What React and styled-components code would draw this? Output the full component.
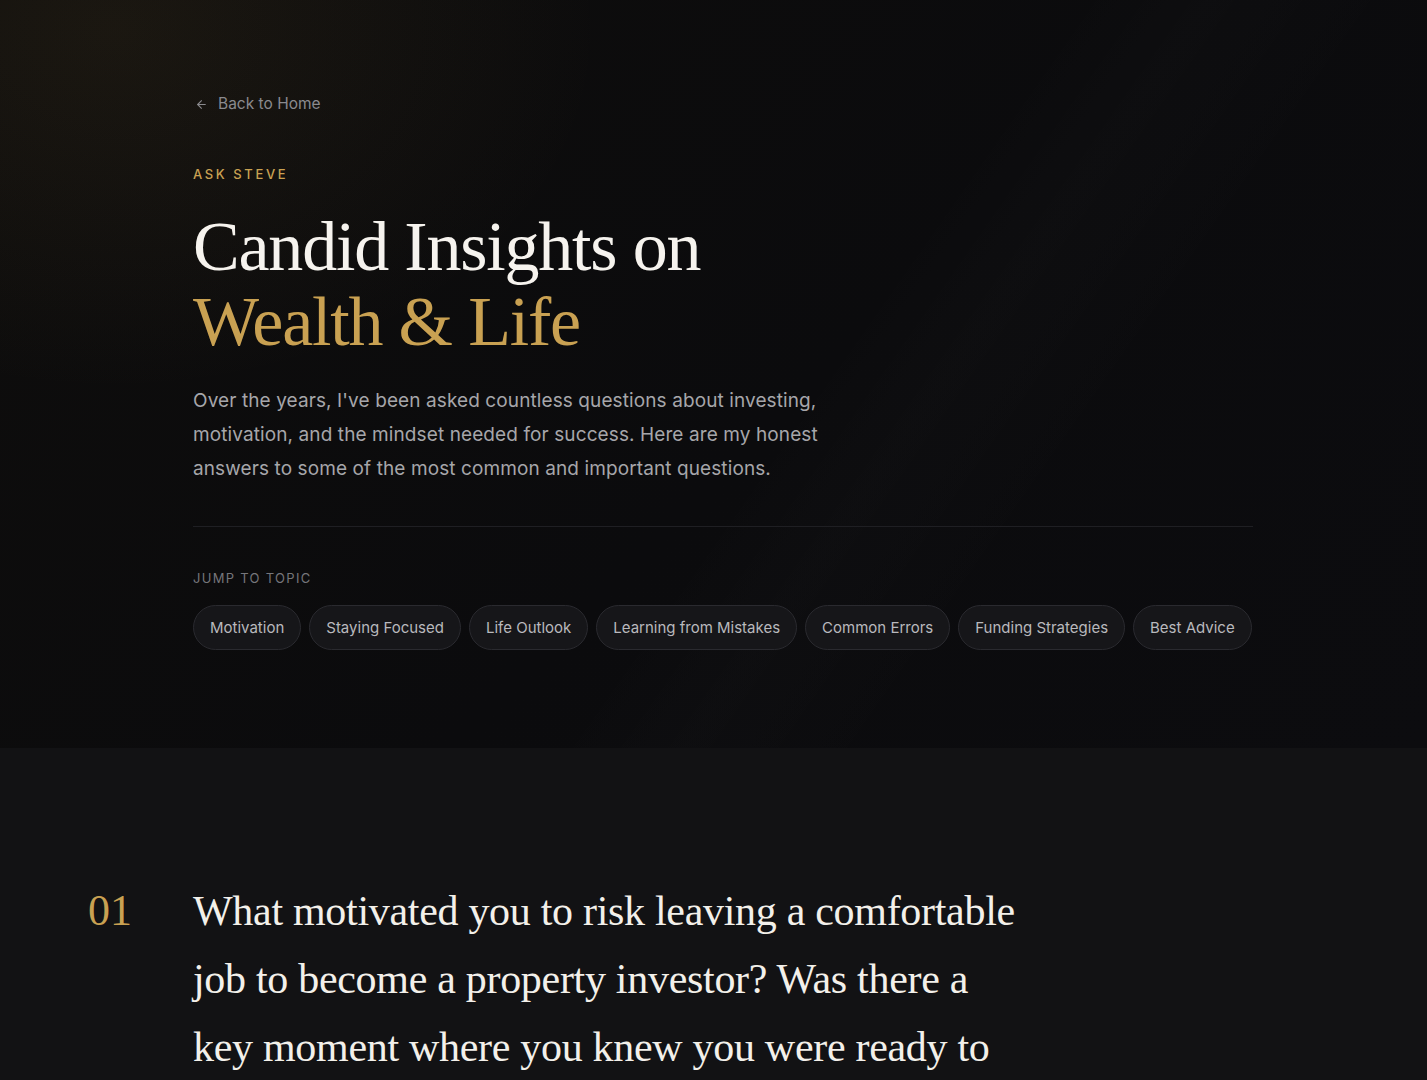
import React from 'react';
import styled, { createGlobalStyle } from 'styled-components';
import { ArrowLeft } from 'lucide-react';

const GlobalStyle = createGlobalStyle`
  html, body {
    margin: 0;
    padding: 0;
    background: #121214;
  }
  * {
    box-sizing: border-box;
  }
`;

const serif = `"Liberation Serif", "Times New Roman", serif`;
const sans = `Inter, "Noto Sans", "Liberation Sans", sans-serif`;

const Page = styled.div`
  min-height: 100vh;
  background: #121214;
  font-family: ${sans};
`;

const Hero = styled.section`
  padding: 92px 0 98px 0;
  background:
    radial-gradient(ellipse 700px 520px at 8% 4%, rgba(201, 160, 80, 0.07), transparent 70%),
    linear-gradient(125deg, transparent 55%, rgba(255, 255, 255, 0.012) 62%, transparent 72%),
    linear-gradient(135deg, #0e0d0c 0%, #0b0b0d 55%, #0c0c0f 100%);
`;

const HeroInner = styled.div`
  width: 1060px;
  margin-left: 193px;
`;

const BackLink = styled.a`
  display: inline-flex;
  align-items: center;
  gap: 10px;
  color: #8a8a8e;
  font-size: 15.5px;
  line-height: 24px;
  text-decoration: none;
  cursor: pointer;

  svg {
    margin-left: 2px;
  }
`;

const Eyebrow = styled.div`
  margin-top: 48px;
  color: #c9a152;
  font-size: 13px;
  line-height: 20px;
  font-weight: 500;
  letter-spacing: 0.2em;
  text-transform: uppercase;
`;

const Title = styled.h1`
  margin: 25px 0 0 0;
  font-family: ${serif};
  font-weight: 400;
  font-size: 70px;
  line-height: 75px;
  letter-spacing: -1.2px;
  color: #f6f3ee;
`;

const Gold = styled.span`
  display: block;
  color: #c9a152;
`;

const Intro = styled.p`
  margin: 25px 0 0 0;
  max-width: 660px;
  color: #a6a6aa;
  font-size: 19px;
  line-height: 34px;
  letter-spacing: 0.1px;
`;

const Divider = styled.hr`
  margin: 40px 0 0 0;
  border: none;
  border-top: 1px solid #1f1f23;
`;

const TopicLabel = styled.div`
  margin-top: 41px;
  color: #76767b;
  font-size: 13px;
  line-height: 20px;
  letter-spacing: 0.1em;
  text-transform: uppercase;
`;

const PillRow = styled.div`
  display: flex;
  flex-wrap: wrap;
  gap: 8px;
  margin-top: 17px;
`;

const Pill = styled.button`
  font-family: ${sans};
  font-size: 15px;
  line-height: 21px;
  padding: 11px 16px;
  border-radius: 999px;
  border: 1px solid #2a2a2f;
  background: #161619;
  color: #b9b9bd;
  white-space: nowrap;
  cursor: pointer;
`;

const Questions = styled.section`
  padding: 129px 0 80px 88px;
`;

const QuestionRow = styled.div`
  display: grid;
  grid-template-columns: 105px 835px;
  align-items: start;
`;

const QNumber = styled.div`
  font-family: ${serif};
  font-size: 44px;
  line-height: 68px;
  color: #c9a152;
`;

const QText = styled.h2`
  margin: 0;
  font-family: ${serif};
  font-weight: 400;
  font-size: 42px;
  line-height: 68px;
  letter-spacing: -0.3px;
  color: #f3f0ea;
`;

const topics = [
  'Motivation',
  'Staying Focused',
  'Life Outlook',
  'Learning from Mistakes',
  'Common Errors',
  'Funding Strategies',
  'Best Advice',
];

export default function App() {
  return (
    <Page>
      <GlobalStyle />
      <Hero>
        <HeroInner>
          <BackLink>
            <ArrowLeft size={13} strokeWidth={2} />
            Back to Home
          </BackLink>
          <Eyebrow>Ask Steve</Eyebrow>
          <Title>
            Candid Insights on
            <Gold>Wealth &amp; Life</Gold>
          </Title>
          <Intro>
            Over the years, I've been asked countless questions about investing,
            motivation, and the mindset needed for success. Here are my honest
            answers to some of the most common and important questions.
          </Intro>
          <Divider />
          <TopicLabel>Jump to topic</TopicLabel>
          <PillRow>
            {topics.map((t) => (
              <Pill key={t}>{t}</Pill>
            ))}
          </PillRow>
        </HeroInner>
      </Hero>

      <Questions>
        <QuestionRow>
          <QNumber>01</QNumber>
          <QText>
            What motivated you to risk leaving a comfortable job to become a
            property investor? Was there a key moment where you knew you were
            ready to take the leap?
          </QText>
        </QuestionRow>
      </Questions>
    </Page>
  );
}
